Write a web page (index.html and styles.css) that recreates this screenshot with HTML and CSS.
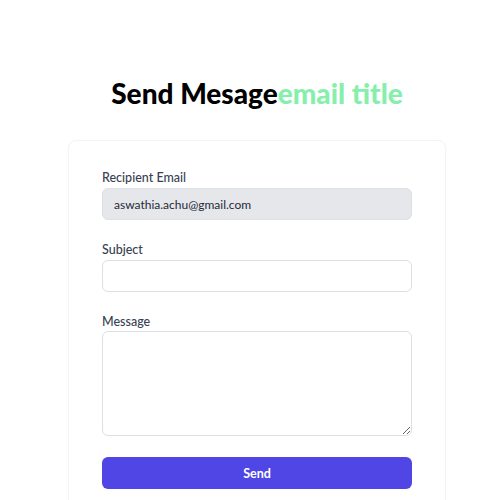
FILE: index.html
```html
<!DOCTYPE html>
<html>
<head>
<meta charset="utf-8">
<link rel="stylesheet" href="styles.css">
</head>
<body>
<main class="page">
  <h1 class="title">Send Mesage<span class="accent">email title</span></h1>
  <form class="card">
    <div class="field">
      <label class="label">Recipient Email</label>
      <input class="input input-disabled" type="text" value="aswathia.achu@gmail.com" readonly>
    </div>
    <div class="field">
      <label class="label">Subject</label>
      <input class="input" type="text">
    </div>
    <div class="field">
      <label class="label label-tight">Message</label>
      <textarea class="input textarea"></textarea>
    </div>
    <button class="button" type="button">Send</button>
  </form>
</main>
</body>
</html>
```
FILE: styles.css
```css
* { box-sizing: border-box; }
html, body { margin: 0; background: #ffffff; }
body { font-family: Lato, "Noto Sans", sans-serif; color: #1f2937; }
.page { padding-top: 75px; padding-left: 14px; display: flex; flex-direction: column; align-items: center; }
.title {
  margin: 0;
  font-size: 28px;
  line-height: 36px;
  font-weight: 900;
  color: #000;
}
.accent { color: #86efac; }
.card {
  margin-top: 29px;
  width: 378px;
  padding: 27px 33px 30px;
  background: #fff;
  border: 1px solid #f3f4f6;
  border-radius: 8px;
  box-shadow: 0 1px 2px rgba(0,0,0,0.04);
  display: flex;
  flex-direction: column;
  gap: 20px;
}
.field { display: flex; flex-direction: column; }
.label {
  font-size: 12.5px;
  line-height: 20px;
  color: #374151;
  font-weight: 500;
}
.label-tight { line-height: 18px; padding-top: 1px; }
.input {
  display: block;
  width: 100%;
  height: 32px;
  border: 1px solid #dcdfe4;
  border-radius: 6px;
  padding: 0 11px;
  font-family: Lato, "Noto Sans", sans-serif;
  font-size: 12px;
  color: #1f2937;
  background: #fff;
  outline: none;
}
.input-disabled { background: #e5e7eb; }
.textarea { height: 105px; resize: vertical; padding: 8px 11px; }
.button {
  height: 32px;
  margin-top: 1px;
  border: none;
  border-radius: 6px;
  background: #4f46e5;
  color: #fff;
  font-family: Lato, "Noto Sans", sans-serif;
  font-size: 12.5px;
  font-weight: 700;
}
```
